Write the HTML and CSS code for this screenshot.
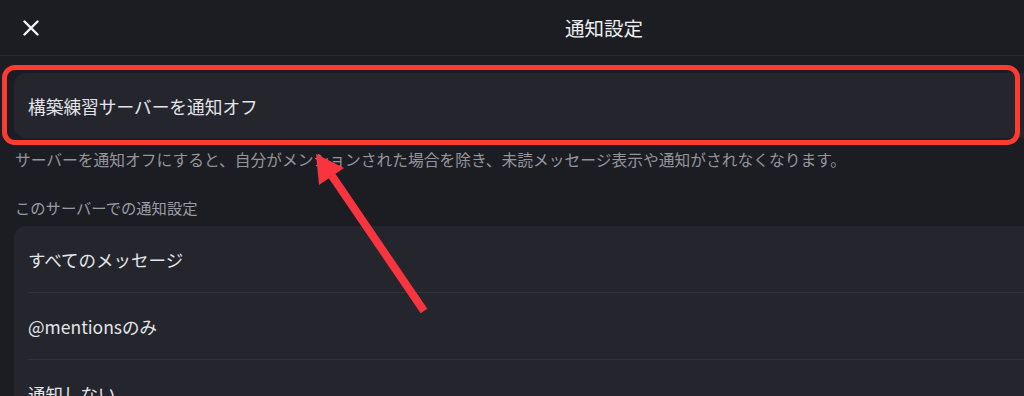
FILE: index.html
```html
<!DOCTYPE html>
<html lang="ja">
<head>
<meta charset="utf-8">
<title>通知設定</title>
<link rel="stylesheet" href="styles.css">
</head>
<body>
<div class="page">
  <div class="frame">
    <header class="topbar">
      <button class="close" aria-label="閉じる">
        <svg width="16" height="16" viewBox="0 0 16 16"><path d="M1.5 1.5 L14.5 14.5 M14.5 1.5 L1.5 14.5" stroke="#f2f3f5" stroke-width="2.4" stroke-linecap="round" fill="none"/></svg>
      </button>
      <h1 class="title">通知設定</h1>
    </header>
    <main class="content">
      <div class="card mute">構築練習サーバーを通知オフ</div>
      <p class="desc">サーバーを通知オフにすると、自分がメンションされた場合を除き、未読メッセージ表示や通知がされなくなります。</p>
      <p class="label">このサーバーでの通知設定</p>
      <div class="card list">
        <div class="row">すべてのメッセージ</div>
        <div class="row">@mentionsのみ</div>
        <div class="row">通知しない</div>
      </div>
    </main>
  </div>
  <div class="highlight"></div>
  <svg class="arrow" width="1024" height="396" viewBox="0 0 1024 396">
    <line x1="424" y1="311" x2="328" y2="170" stroke="#f8343f" stroke-width="8"/>
    <polygon points="316,154 319,185 344,168" fill="#f8343f"/>
  </svg>
</div>
</body>
</html>
```

FILE: styles.css
```css
html, body {
  margin: 0;
  padding: 0;
  background: #1c1d22;
  overflow: hidden;
}
body {
  font-family: "Noto Sans CJK JP", "Noto Sans", sans-serif;
  color: #e4e5e9;
}
.page {
  position: relative;
  width: 1024px;
  height: 396px;
  overflow: hidden;
}
.frame {
  width: 1208px;
}
.topbar {
  height: 55px;
  border-bottom: 1px solid #2a2b31;
  display: flex;
  align-items: center;
  justify-content: center;
  position: relative;
}
.close {
  position: absolute;
  left: 23px;
  top: 20px;
  width: 16px;
  height: 16px;
  padding: 0;
  border: 0;
  background: none;
  display: block;
}
.close svg { display: block; }
.title {
  margin: 0;
  font-size: 19.5px;
  font-weight: 400;
  color: #eceef1;
  line-height: 1;
}
.content {
  padding: 0 0 0 14px;
}
.card {
  background: #25262d;
  border-radius: 12px;
}
.mute {
  margin-top: 17px;
  height: 65px;
  display: flex;
  align-items: center;
  padding-left: 14px;
  font-size: 17.7px;
  color: #e4e5e9;
}
.desc {
  margin: 11px 0 0 1px;
  font-size: 15.75px;
  line-height: 22px;
  color: #94959c;
  white-space: nowrap;
}
.label {
  margin: 25px 0 0 1px;
  font-size: 15.3px;
  line-height: 22px;
  color: #9a9ba2;
}
.list {
  margin-top: 8px;
  padding-left: 14px;
}
.row {
  height: 66px;
  display: flex;
  align-items: center;
  font-size: 17.5px;
  color: #e4e5e9;
  border-bottom: 1px solid #303139;
}
.row:last-child { border-bottom: 0; }
.highlight {
  position: absolute;
  left: 2px;
  top: 65px;
  width: 1018px;
  height: 80px;
  box-sizing: border-box;
  border: 5px solid #ff3b30;
  border-radius: 13px;
}
.arrow {
  position: absolute;
  left: 0;
  top: 0;
  pointer-events: none;
}
```
